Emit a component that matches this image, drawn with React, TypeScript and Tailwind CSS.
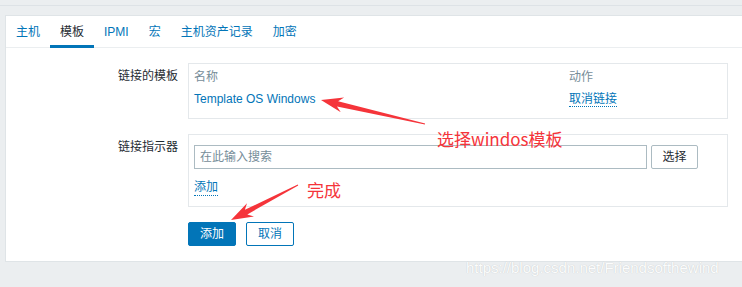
import React from "react";

const font = "font-['Liberation_Sans','Noto_Sans_CJK_SC',sans-serif]";
const cjk = "font-['Noto_Sans_CJK_SC','Liberation_Sans',sans-serif]";

const tabs = ["主机", "模板", "IPMI", "宏", "主机资产记录", "加密"];

// 红色标注箭头（细尾、尖头）
const arrowPoints = (x1: number, y1: number, x2: number, y2: number) => {
  const dx = x2 - x1;
  const dy = y2 - y1;
  const len = Math.hypot(dx, dy);
  const ux = dx / len;
  const uy = dy / len;
  const nx = -uy;
  const ny = ux;
  const headLen = 22;
  const headW = 7.5;
  const shaftW = 2.6;
  const bx = x2 - ux * headLen;
  const by = y2 - uy * headLen;
  const ix = x2 - ux * (headLen - 5);
  const iy = y2 - uy * (headLen - 5);
  const pts = [
    [x1 + nx * 0.4, y1 + ny * 0.4],
    [ix + nx * shaftW, iy + ny * shaftW],
    [bx + nx * headW, by + ny * headW],
    [x2, y2],
    [bx - nx * headW, by - ny * headW],
    [ix - nx * shaftW, iy - ny * shaftW],
    [x1 - nx * 0.4, y1 - ny * 0.4],
  ];
  return pts.map((p) => `${p[0].toFixed(1)},${p[1].toFixed(1)}`).join(" ");
};

export default function App() {
  return (
    <div className={`relative w-[742px] h-[287px] overflow-hidden bg-[#ebeef0] text-[12px] text-[#1f2c33] ${font}`}>
      <div className="h-[6px] border-b border-[#dde2e6]" />

      {/* パネル */}
      <div className="mt-[9px] ml-[5px] w-[760px] border border-[#dfe4e7] bg-white">
        {/* タブ */}
        <div className="flex h-[32px] border-b border-[#ebeef0]">
          {tabs.map((t, i) => (
            <div
              key={t}
              className={`h-[32px] -mb-px px-[10px] pt-[3px] flex items-center leading-[16px] border-b-[3px] ${
                i === 1 ? "border-[#0275b8] text-[#1f2c33]" : "border-transparent text-[#0275b8]"
              }`}
            >
              {t}
            </div>
          ))}
        </div>

        <div className="pt-[15px] pb-[15px] flex flex-col gap-[15px]">
          {/* 链接的模板 */}
          <div className="flex gap-[10px]">
            <div className="w-[172px] text-right pt-[5px] leading-[16px]">链接的模板</div>
            <div className="w-[540px] border border-[#e4e8eb] px-[5px] pt-[5px] pb-[11px] leading-[16px]">
              <div className="grid grid-cols-[375px_1fr] text-[#768d99]">
                <span>名称</span>
                <span>动作</span>
              </div>
              <div className="grid grid-cols-[375px_1fr] mt-[6px]">
                <span className="text-[#0275b8]">Template OS Windows</span>
                <span>
                  <span className="text-[#0275b8] border-b border-dotted border-[#0275b8]">取消链接</span>
                </span>
              </div>
            </div>
          </div>

          {/* 链接指示器 */}
          <div className="flex gap-[10px]">
            <div className="w-[172px] text-right pt-[5px] leading-[16px]">链接指示器</div>
            <div className="w-[540px] border border-[#e4e8eb] px-[5px] pt-[10px] pb-[10px]">
              <div className="flex gap-[4px]">
                <div className="w-[453px] h-[24px] border border-[#acbbc2] px-[5px] flex items-center text-[#768d99]">
                  在此输入搜索
                </div>
                <div className="w-[47px] h-[24px] border border-[#acbbc2] rounded-[2px] flex items-center justify-center">
                  选择
                </div>
              </div>
              <div className="mt-[10px] leading-[16px]">
                <span className="inline-block text-[#0275b8] border-b border-dotted border-[#0275b8]">添加</span>
              </div>
            </div>
          </div>

          {/* ボタン */}
          <div className="flex gap-[10px] pl-[182px]">
            <div className="w-[48px] h-[24px] rounded-[2px] bg-[#0275b8] border border-[#0275b8] text-white flex items-center justify-center">
              添加
            </div>
            <div className="w-[48px] h-[24px] rounded-[2px] bg-white border border-[#0275b8] text-[#0275b8] flex items-center justify-center">
              取消
            </div>
          </div>
        </div>
      </div>

      {/* 注釈 */}
      <svg className="absolute inset-0 pointer-events-none" width="742" height="287">
        <polygon points={arrowPoints(425, 124, 321, 100)} fill="#f5343a" />
        <polygon points={arrowPoints(298, 185, 231, 220)} fill="#f5343a" />
      </svg>
      <div className={`absolute left-[437px] top-[129px] text-[17px] leading-[20px] text-[#f5343a] ${cjk}`}>
        选择windos模板
      </div>
      <div className={`absolute left-[307px] top-[180px] text-[17px] leading-[20px] text-[#f5343a] ${cjk}`}>
        完成
      </div>
      <div className="absolute left-[466px] top-[259px] text-[15px] leading-[18px] text-[#fbfcfc] [text-shadow:0_0_1px_rgba(0,0,0,0.2)]">
        https://blog.csdn.net/Friendsofthewind
      </div>
    </div>
  );
}
